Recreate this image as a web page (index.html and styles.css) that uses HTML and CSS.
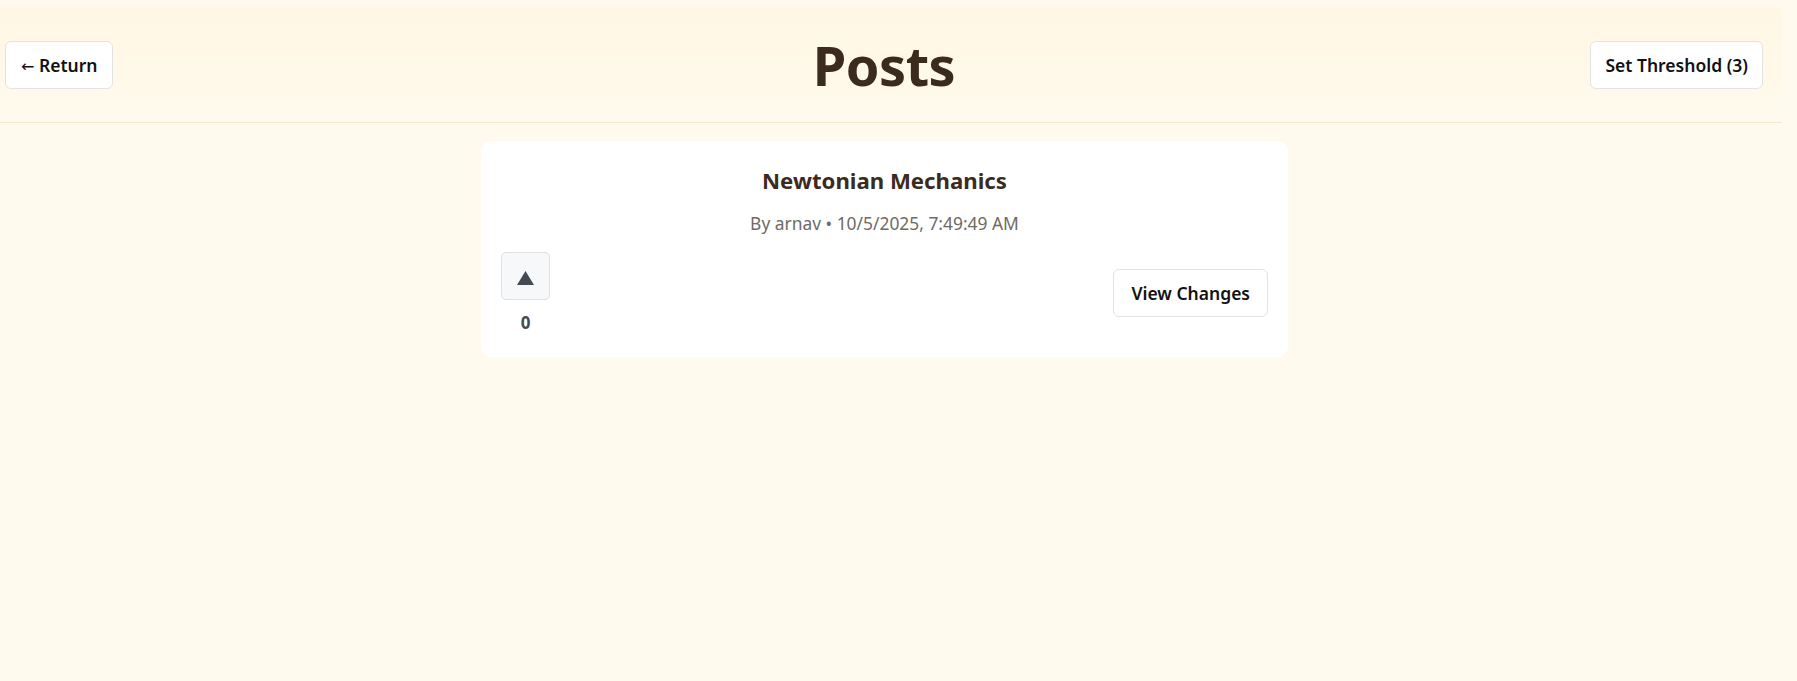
FILE: index.html
```html
<!DOCTYPE html>
<html lang="en">
<head>
  <meta charset="UTF-8">
  <meta name="viewport" content="width=device-width, initial-scale=1.0">
  <title>Posts</title>
  <link rel="stylesheet" href="styles.css">
</head>
<body>
  <div class="app">
    <header class="topbar">
      <button class="btn btn-back"><span class="arrow">&larr;</span> Return</button>
      <h1 class="page-title">Posts</h1>
      <button class="btn btn-threshold">Set Threshold (3)</button>
    </header>

    <main class="feed">
      <article class="post-card">
        <h3 class="post-title">Newtonian Mechanics</h3>
        <p class="post-meta">By arnav &bull; 10/5/2025, 7:49:49 AM</p>
        <div class="post-actions">
          <div class="vote">
            <button class="vote-btn" aria-label="Upvote">
              <svg width="17" height="14" viewBox="0 0 17 14"><polygon points="8.5,0 17,14 0,14" fill="#444a53"/></svg>
            </button>
            <span class="vote-count">0</span>
          </div>
          <button class="btn btn-changes">View Changes</button>
        </div>
      </article>
    </main>
  </div>
</body>
</html>
```

FILE: styles.css
```css
/* General Styles */
body {
  margin: 0;
  font-family: "Noto Sans", "Open Sans", Arial, sans-serif;
  background: #fff9ee;
  color: #3b2b1f;
}

.app {
  padding-top: 8px;
  margin-right: 15px;
}

.topbar {
  display: grid;
  grid-template-columns: 1fr auto 1fr;
  align-items: center;
  height: 114px;
  padding: 0 19px 0 5px;
  background: linear-gradient(180deg, #fff7e4, #fffaee);
  border-bottom: 1px solid #f3e7cc;
}

.page-title {
  margin: 0;
  font-size: 54px;
  font-weight: 700;
  color: #3b2b1f;
  letter-spacing: -0.5px;
}

.btn {
  height: 48px;
  padding: 0 14px;
  background: #fff;
  border: 1px solid #e3e3e3;
  border-radius: 6px;
  font-family: inherit;
  font-size: 17.5px;
  font-weight: 600;
  color: #111;
  cursor: pointer;
}

.arrow {
  font-family: "DejaVu Sans", sans-serif;
  font-weight: 400;
  font-size: 16px;
}

.btn-back {
  justify-self: start;
  padding: 0 15px;
}

.btn-threshold {
  justify-self: end;
}

.btn-changes {
  padding: 0 17px;
}

.feed {
  padding: 18px 13px 0 0;
}

.post-card {
  width: 767px;
  margin: 0 auto;
  padding: 20px 20px 23px;
  background: #fff;
  border-radius: 10px;
}

.post-title {
  margin: 5px 0 0;
  line-height: 30px;
  text-align: center;
  font-size: 22.2px;
  font-weight: 700;
  color: #3b2b1f;
}

.post-meta {
  margin: 15px 0 0;
  line-height: 24px;
  text-align: center;
  font-size: 17.4px;
  color: #6e6a66;
}

.post-actions {
  display: flex;
  justify-content: space-between;
  align-items: center;
  margin-top: 17px;
}

.vote {
  display: flex;
  flex-direction: column;
  align-items: center;
  gap: 12px;
  width: 49px;
}

.vote-btn {
  display: flex;
  align-items: center;
  justify-content: center;
  width: 49px;
  height: 48px;
  padding: 4px 0 0;
  background: #f7f8fa;
  border: 1px solid #dfe1e5;
  border-radius: 5px;
  cursor: pointer;
}

.vote-count {
  line-height: 22px;
  font-size: 17px;
  font-weight: 700;
  color: #444a53;
}
```
